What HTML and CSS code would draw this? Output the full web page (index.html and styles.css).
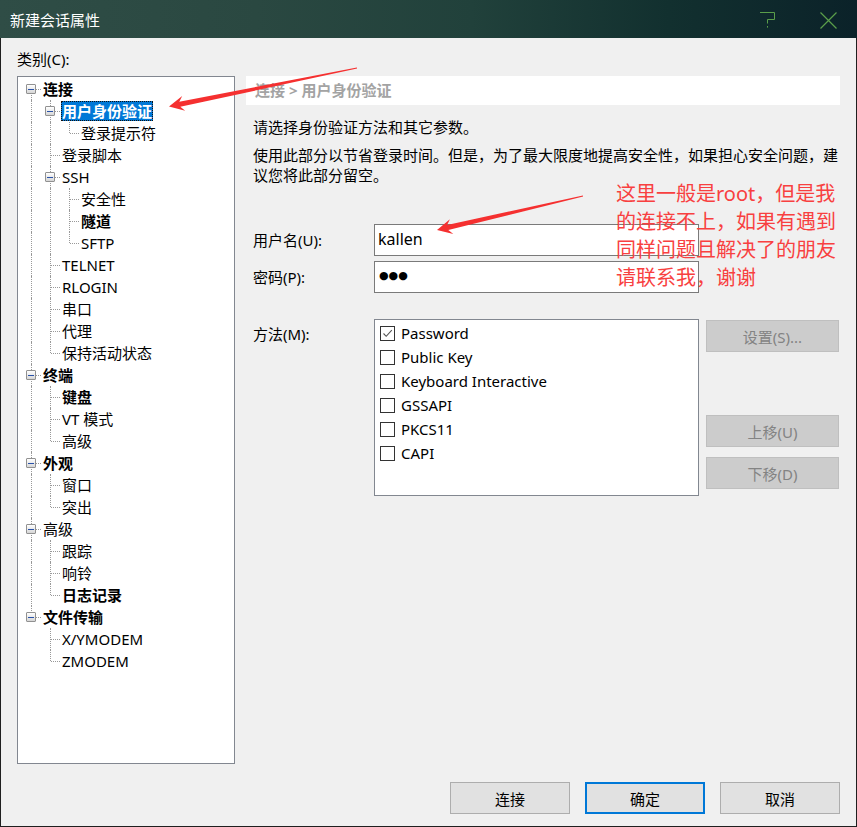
FILE: index.html
```html
<!DOCTYPE html>
<html lang="zh-CN">
<head>
<meta charset="utf-8">
<title>新建会话属性</title>
<link rel="stylesheet" href="styles.css">
</head>
<body>
<div class="window">
  <div class="titlebar">
    <span class="title">新建会话属性</span>
    <div class="tb-icons">
      <svg class="tb-help" width="16" height="18" viewBox="0 0 16 18"><path d="M0 0.5H14.5V7.5H7.5V11.5" fill="none" stroke="#5a9e4a" stroke-width="1"/><rect x="7" y="14" width="1" height="1.6" fill="#5a9e4a"/></svg>
      <svg class="tb-close" width="17" height="17" viewBox="0 0 17 17"><path d="M0.5 0.5L16.5 16.5M16.5 0.5L0.5 16.5" stroke="#5a9e4a" stroke-width="1.2" fill="none"/></svg>
    </div>
  </div>
  <div class="body">
    <div class="main">
      <div class="cat-label">类别(C):</div>
      <div class="tree">
        <div class="node"><span class="c f"><i class="exp"></i></span><span class="lbl b">连接</span></div>
        <div class="node"><span class="c v"></span><span class="c t"><i class="exp"></i></span><span class="lbl b sel">用户身份验证</span></div>
        <div class="node"><span class="c v"></span><span class="c v"></span><span class="c l"></span><span class="lbl">登录提示符</span></div>
        <div class="node"><span class="c v"></span><span class="c t"></span><span class="lbl">登录脚本</span></div>
        <div class="node"><span class="c v"></span><span class="c t"><i class="exp"></i></span><span class="lbl">SSH</span></div>
        <div class="node"><span class="c v"></span><span class="c v"></span><span class="c t"></span><span class="lbl">安全性</span></div>
        <div class="node"><span class="c v"></span><span class="c v"></span><span class="c t"></span><span class="lbl b">隧道</span></div>
        <div class="node"><span class="c v"></span><span class="c v"></span><span class="c l"></span><span class="lbl">SFTP</span></div>
        <div class="node"><span class="c v"></span><span class="c t"></span><span class="lbl">TELNET</span></div>
        <div class="node"><span class="c v"></span><span class="c t"></span><span class="lbl">RLOGIN</span></div>
        <div class="node"><span class="c v"></span><span class="c t"></span><span class="lbl">串口</span></div>
        <div class="node"><span class="c v"></span><span class="c t"></span><span class="lbl">代理</span></div>
        <div class="node"><span class="c v"></span><span class="c l"></span><span class="lbl">保持活动状态</span></div>
        <div class="node"><span class="c t"><i class="exp"></i></span><span class="lbl b">终端</span></div>
        <div class="node"><span class="c v"></span><span class="c t"></span><span class="lbl b">键盘</span></div>
        <div class="node"><span class="c v"></span><span class="c t"></span><span class="lbl">VT 模式</span></div>
        <div class="node"><span class="c v"></span><span class="c l"></span><span class="lbl">高级</span></div>
        <div class="node"><span class="c t"><i class="exp"></i></span><span class="lbl b">外观</span></div>
        <div class="node"><span class="c v"></span><span class="c t"></span><span class="lbl">窗口</span></div>
        <div class="node"><span class="c v"></span><span class="c l"></span><span class="lbl">突出</span></div>
        <div class="node"><span class="c t"><i class="exp"></i></span><span class="lbl">高级</span></div>
        <div class="node"><span class="c v"></span><span class="c t"></span><span class="lbl">跟踪</span></div>
        <div class="node"><span class="c v"></span><span class="c t"></span><span class="lbl">响铃</span></div>
        <div class="node"><span class="c v"></span><span class="c l"></span><span class="lbl b">日志记录</span></div>
        <div class="node"><span class="c l"><i class="exp"></i></span><span class="lbl b">文件传输</span></div>
        <div class="node"><span class="c"></span><span class="c t"></span><span class="lbl">X/YMODEM</span></div>
        <div class="node"><span class="c"></span><span class="c l"></span><span class="lbl">ZMODEM</span></div>
      </div>
      <div class="panel">
        <div class="crumb">连接 &gt; 用户身份验证</div>
        <div class="pbody">
          <div class="p1">请选择身份验证方法和其它参数。</div>
          <div class="p2">使用此部分以节省登录时间。但是，为了最大限度地提高安全性，如果担心安全问题，建<br>议您将此部分留空。</div>
          <div class="frow user">
            <span class="flabel">用户名(U):</span>
            <div class="box">kallen</div>
          </div>
          <div class="frow pass">
            <span class="flabel">密码(P):</span>
            <div class="box pw">●●●</div>
          </div>
          <div class="mrow">
            <span class="flabel">方法(M):</span>
            <div class="mlist">
              <div class="opt"><span class="cb"><svg width="13" height="13" viewBox="0 0 13 13"><path d="M2.5 6.5L5.2 9.3L10.8 3.2" fill="none" stroke="#555" stroke-width="1.1"/></svg></span>Password</div>
              <div class="opt"><span class="cb"></span>Public Key</div>
              <div class="opt"><span class="cb"></span>Keyboard Interactive</div>
              <div class="opt"><span class="cb"></span>GSSAPI</div>
              <div class="opt"><span class="cb"></span>PKCS11</div>
              <div class="opt"><span class="cb"></span>CAPI</div>
            </div>
            <div class="mbtns">
              <div class="dbtn set">设置(S)...</div>
              <div class="dbtn up">上移(U)</div>
              <div class="dbtn down">下移(D)</div>
            </div>
          </div>
        </div>
      </div>
    </div>
    <div class="footer">
      <div class="btn">连接</div>
      <div class="btn default">确定</div>
      <div class="btn">取消</div>
    </div>
  </div>
  <svg class="annot" width="857" height="827" viewBox="0 0 857 827">
    <polygon points="356.9,67.4 179.3,101.8 182.2,96.1 169,106.5 185.2,110.8 180.3,106.7 357.1,68.6" fill="#f53030"/>
    <polygon points="582.9,195.4 447.1,225.1 449.9,219.3 437,230 453.3,233.9 448.3,229.9 583.1,196.6" fill="#f53030"/>
  </svg>
  <div class="note">这里一般是root，但是我<br>的连接不上，如果有遇到<br>同样问题且解决了的朋友<br>请联系我，谢谢</div>
</div>
</body>
</html>
```

FILE: styles.css
```css
* { box-sizing: border-box; }
html, body { margin: 0; padding: 0; }
body {
  width: 857px;
  height: 827px;
  overflow: hidden;
  font-family: "Noto Sans", "Noto Sans CJK SC", sans-serif;
  font-size: 15px;
  color: #000;
  background: #f0f0f0;
}
.window {
  position: relative;
  width: 857px;
  height: 827px;
  display: flex;
  flex-direction: column;
}
.titlebar {
  height: 38px;
  flex: none;
  display: flex;
  align-items: flex-start;
  color: #fff;
  background: linear-gradient(90deg, #2f4d46 0%, #2a4841 30%, #21413b 55%, #12302f 78%, #0b2229 100%);
}
.title { padding-left: 10px; line-height: 40px; font-size: 15px; }
.tb-icons {
  margin-left: auto;
  display: flex;
  align-items: flex-start;
  gap: 44px;
  padding: 12px 20px 0 0;
}
.body {
  flex: 1;
  background: #f0f0f0;
  border: 1px solid #1f1f1f;
  border-top: none;
  padding: 11px 16px 12px;
  display: flex;
  flex-direction: column;
}
.main {
  display: grid;
  grid-template-columns: 218px 594px;
  grid-template-rows: 27px 688px;
  column-gap: 11px;
}
.cat-label { grid-column: 1; grid-row: 1; line-height: 20px; }
.tree {
  grid-column: 1;
  grid-row: 2;
  background: #fff;
  border: 1px solid #828790;
  padding: 1px 0 0 4px;
}
.node { display: flex; align-items: center; height: 22px; }
.c {
  position: relative;
  flex: none;
  width: 19px;
  height: 22px;
  display: flex;
  align-items: center;
  padding-left: 4px;
}
.c::before, .c::after { content: none; position: absolute; }
.v::before, .t::before {
  content: '';
  left: 9px; top: 0; bottom: 0;
  border-left: 1px dotted #999;
}
.l::before {
  content: '';
  left: 9px; top: 0; height: 11px;
  border-left: 1px dotted #999;
}
.f::before {
  content: '';
  left: 9px; top: 11px; bottom: 0;
  border-left: 1px dotted #999;
}
.t::after, .l::after, .f::after {
  content: '';
  left: 10px; top: 11px; width: 9px;
  border-top: 1px dotted #999;
}
.exp {
  position: relative;
  z-index: 1;
  width: 10px;
  height: 10px;
  border: 1px solid #919191;
  border-radius: 1px;
  background: linear-gradient(#ffffff, #d6d6d6);
  display: flex;
  align-items: center;
  justify-content: center;
}
.exp::before { content: ''; width: 6px; height: 1px; background: #2a52a8; }
.lbl {
  margin-left: 1px;
  border: 1px solid transparent;
  line-height: 18px;
  white-space: nowrap;
}
.lbl.b { font-weight: bold; }
.lbl.sel { background: #0078d7; color: #fff; border: 1px dotted #111; }

.panel { grid-column: 2; grid-row: 2; }
.crumb {
  height: 29px;
  background: #fff;
  padding-left: 9px;
  line-height: 29px;
  font-weight: bold;
  color: #a3a3a3;
}
.pbody { padding-left: 7px; }
.p1 { margin-top: 12px; line-height: 20px; }
.p2 { margin-top: 8px; line-height: 20px; white-space: nowrap; }
.frow { display: flex; align-items: center; }
.flabel { width: 121px; flex: none; line-height: 20px; }
.user { margin-top: 39px; }
.pass { margin-top: 5px; }
.box {
  width: 325px;
  height: 32px;
  border: 1px solid #7a7a7a;
  background: #fff;
  padding-left: 3px;
  font-size: 16px;
  line-height: 29px;
}
.box.pw { font-family: "DejaVu Sans", sans-serif; font-size: 11px; line-height: 28px; padding-left: 4px; }
.mrow { margin-top: 26px; display: flex; align-items: flex-start; }
.mrow .flabel { padding-top: 5px; }
.mlist {
  width: 325px;
  height: 177px;
  flex: none;
  border: 1px solid #828790;
  background: #fff;
  padding: 1px 0 0 5px;
}
.opt { height: 24px; display: flex; align-items: center; gap: 6px; }
.cb {
  width: 15px;
  height: 15px;
  flex: none;
  border: 1px solid #333;
  background: #fff;
  display: flex;
}
.mbtns { margin-left: 7px; width: 133px; flex: none; display: flex; flex-direction: column; }
.dbtn {
  height: 32px;
  background: #cccccc;
  border: 1px solid #bfbfbf;
  color: #838383;
  display: flex;
  align-items: center;
  justify-content: center;
}
.dbtn.set { margin-top: 1px; }
.dbtn.up { margin-top: 63px; }
.dbtn.down { margin-top: 10px; }
.footer { margin-top: 18px; display: flex; justify-content: flex-end; gap: 15px; }
.btn {
  width: 120px;
  height: 32px;
  background: #e1e1e1;
  border: 1px solid #adadad;
  display: flex;
  align-items: center;
  justify-content: center;
}
.btn.default { border: 2px solid #0078d7; }
.annot { position: absolute; left: 0; top: 0; pointer-events: none; }
.note {
  position: absolute;
  left: 616px;
  top: 180px;
  font-size: 20px;
  line-height: 28px;
  color: #f84040;
  white-space: nowrap;
}
```
